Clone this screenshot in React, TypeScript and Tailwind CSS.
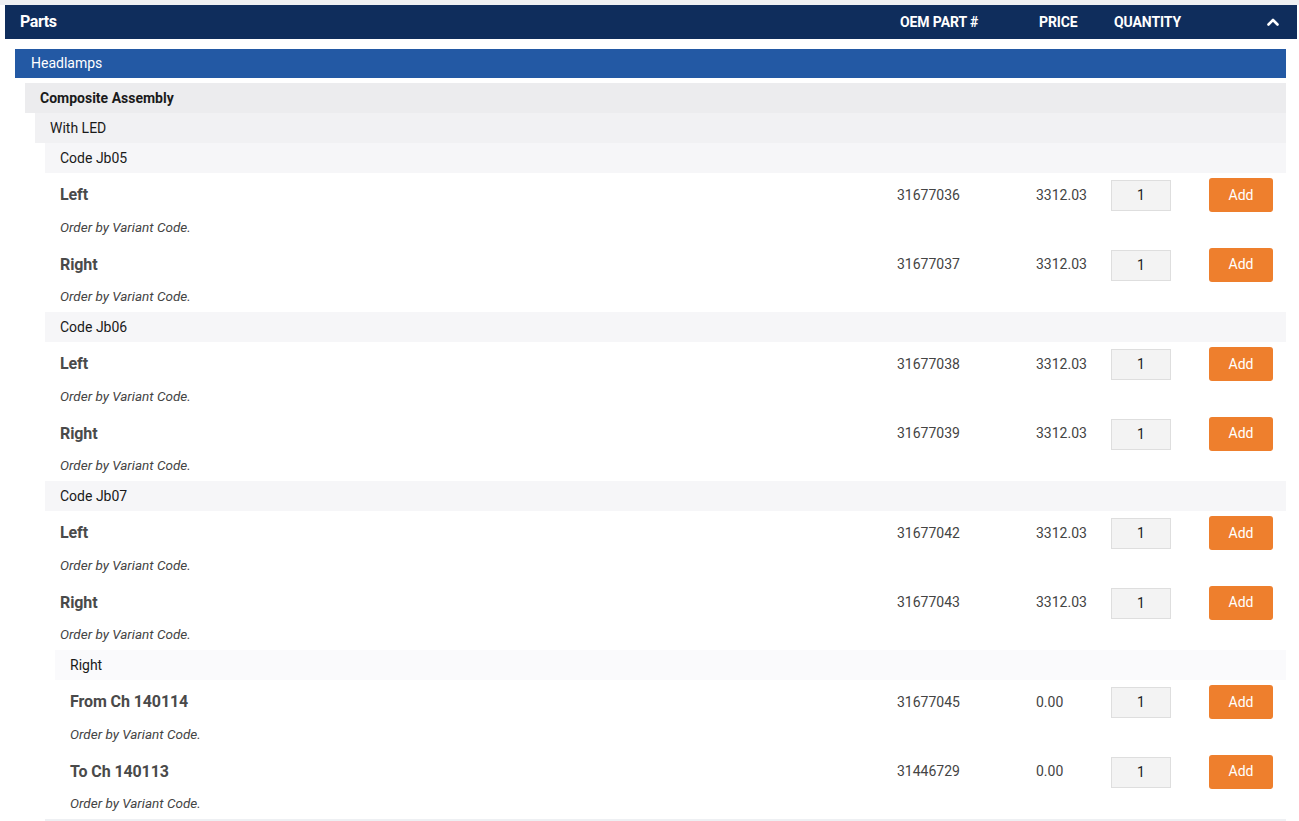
import React from "react";

type Part = { name: string; num: string; price: string };

const font = { fontFamily: "Roboto, 'Noto Sans', Arial, sans-serif" };

function ChevronUpIcon() {
  return (
    <svg width="12" height="8" viewBox="0 0 12 8" fill="none">
      <path d="M1.5 6.5 L6 2 L10.5 6.5" stroke="white" strokeWidth="2.6" strokeLinecap="round" strokeLinejoin="round" />
    </svg>
  );
}

function PartItem({ p }: { p: Part }) {
  return (
    <div className="h-[69.5px] pl-[15px] flex flex-col">
      <div className="h-[44px] flex items-center">
        <div className="flex-1 text-[16px] font-bold text-[#4a4a4a] tracking-[-0.1px]">{p.name}</div>
        <div className="w-[139px] text-[14px] text-[#444]">{p.num}</div>
        <div className="w-[75px] text-[14px] text-[#444]">{p.price}</div>
        <div className="w-[60px] h-[31px] mt-[1px] bg-[#f3f3f3] border border-[#dedede] flex items-center justify-center text-[14px] text-[#222]">
          1
        </div>
        <div className="w-[38px]" />
        <button className="w-[64px] h-[34px] bg-[#ee7f2d] rounded-[3px] text-white text-[14px] flex items-center justify-center">
          Add
        </button>
        <div className="w-[13px]" />
      </div>
      <div className="h-[20px] flex items-center text-[13.5px] italic text-[#444]">Order by Variant Code.</div>
    </div>
  );
}

function SectionHeader({ label, bg, bold }: { label: string; bg: string; bold?: boolean }) {
  return (
    <div className={`h-[30px] flex items-center pl-[15px] text-[14px] text-[#1a1a1a] ${bg} ${bold ? "font-bold" : ""}`}>
      {label}
    </div>
  );
}

const jb05: Part[] = [
  { name: "Left", num: "31677036", price: "3312.03" },
  { name: "Right", num: "31677037", price: "3312.03" },
];
const jb06: Part[] = [
  { name: "Left", num: "31677038", price: "3312.03" },
  { name: "Right", num: "31677039", price: "3312.03" },
];
const jb07: Part[] = [
  { name: "Left", num: "31677042", price: "3312.03" },
  { name: "Right", num: "31677043", price: "3312.03" },
];
const rightParts: Part[] = [
  { name: "From Ch 140114", num: "31677045", price: "0.00" },
  { name: "To Ch 140113", num: "31446729", price: "0.00" },
];

export default function App() {
  return (
    <div className="w-[1299px] h-[821px] bg-white overflow-hidden" style={font}>
      <div className="h-[5px] bg-[#eef0f3]" />
      <div className="ml-[5px] w-[1292px] h-[34px] bg-[#0f2d5c] flex items-center text-white text-[14px] font-bold tracking-[-0.1px]">
        <div className="flex-1 pl-[15px] text-[16px] tracking-[-0.4px]">Parts</div>
        <div className="w-[140px] pl-[1px]">OEM PART #</div>
        <div className="w-[75px]">PRICE</div>
        <div className="w-[153px]">QUANTITY</div>
        <div className="w-[12px] flex items-center"><ChevronUpIcon /></div>
        <div className="w-[18px]" />
      </div>
      <div className="ml-[15px] w-[1271px] mt-[10px]">
        <div className="h-[29px] bg-[#2359a4] flex items-center pl-[16px] text-white text-[14px]">Headlamps</div>
        <div className="ml-[10px] mt-[5px]">
          <SectionHeader label="Composite Assembly" bg="bg-[#ececee]" bold />
          <div className="ml-[10px]">
            <SectionHeader label="With LED" bg="bg-[#f1f1f3]" />
            <div className="ml-[10px]">
              <SectionHeader label="Code Jb05" bg="bg-[#f6f6f8]" />
              {jb05.map((p, i) => (
                <PartItem key={"a" + i} p={p} />
              ))}
              <SectionHeader label="Code Jb06" bg="bg-[#f6f6f8]" />
              {jb06.map((p, i) => (
                <PartItem key={"b" + i} p={p} />
              ))}
              <SectionHeader label="Code Jb07" bg="bg-[#f6f6f8]" />
              {jb07.map((p, i) => (
                <PartItem key={"c" + i} p={p} />
              ))}
              <div className="ml-[10px]">
                <SectionHeader label="Right" bg="bg-[#fafafc]" />
                {rightParts.map((p, i) => (
                  <PartItem key={"d" + i} p={p} />
                ))}
              </div>
              <div className="h-[2px] bg-[#eef0f3]" />
            </div>
          </div>
        </div>
      </div>
    </div>
  );
}
